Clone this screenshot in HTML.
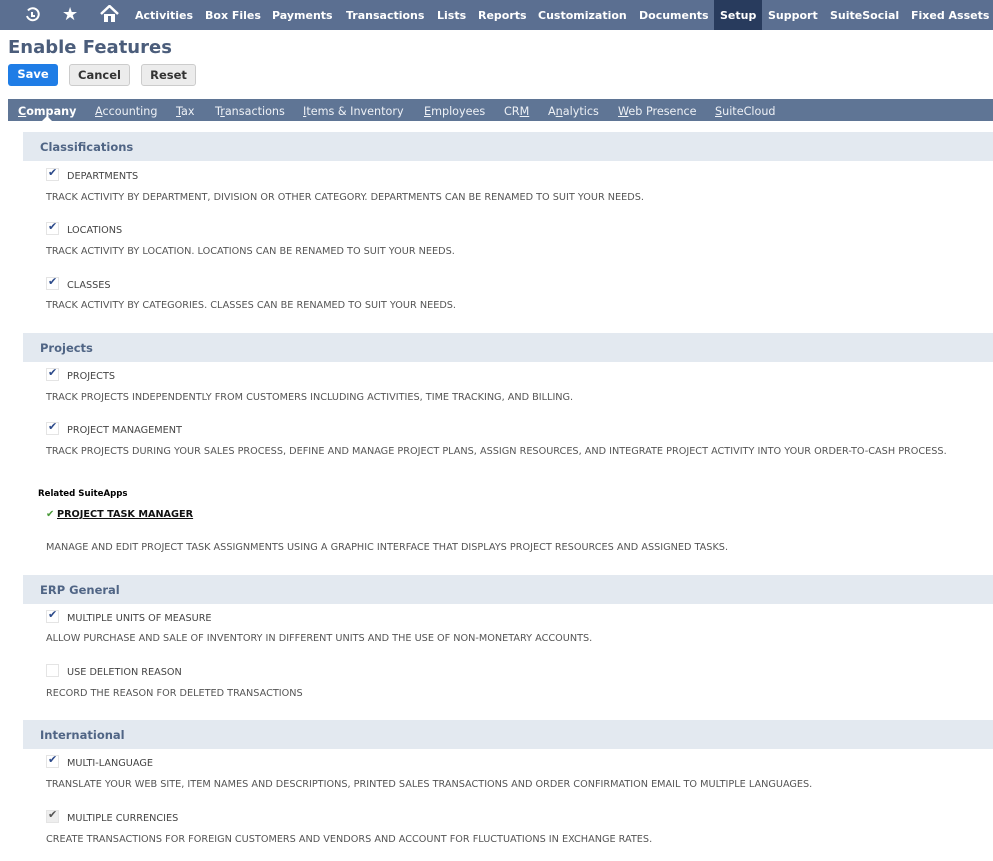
<!DOCTYPE html>
<html><head><meta charset="utf-8"><style>
*{margin:0;padding:0;box-sizing:border-box}
body{width:993px;height:861px;overflow:hidden;background:#fff;font-family:"DejaVu Sans","Liberation Sans",sans-serif;position:relative}
.a{position:absolute;white-space:nowrap}
#top{position:absolute;left:0;top:0;width:993px;height:30px;background:#5b6f91}
.n{position:absolute;top:9px;font-size:11px;font-weight:bold;color:#fff;white-space:nowrap}
#setup{position:absolute;left:714px;top:0;width:48px;height:30px;background:#283b5d}
h1{position:absolute;left:8px;top:37px;font-size:18px;font-weight:bold;color:#4b5d7b;white-space:nowrap}
.btn{position:absolute;top:64px;height:22px;font-size:11.5px;font-weight:bold;text-align:center;line-height:21px;border-radius:3px}
#tabs{position:absolute;left:8px;top:99px;width:985px;height:22px;background:#5f7595}
.t{position:absolute;top:105px;font-size:11.2px;color:#eef1f6;white-space:nowrap}
.t u{text-decoration:underline}
.sh{position:absolute;left:23px;width:970px;height:29px;background:#e3e9f0}
.sh span{position:absolute;left:17px;top:8px;font-size:11.5px;font-weight:bold;color:#506585}
.cb{position:absolute;left:46px;width:13px;height:13px;border:1px solid #e4e4e4;background:#fff}
.cb::after{content:"✔";position:absolute;left:1px;top:-3px;font-size:11px;color:#2c4a8a}
.cb.g::after{color:#555}
.cb.e::after{content:""}
.l{position:absolute;left:67px;font-size:9.7px;color:#444;white-space:nowrap}
.d{position:absolute;left:46px;font-size:9.7px;color:#555;white-space:nowrap}
</style></head><body>
<div id="top"></div><div id="setup"></div>
<svg class="a" style="left:24px;top:7px" width="16" height="16" viewBox="0 0 16 16"><path d="M4 3.5A6 6 0 1 1 3 9" fill="none" stroke="#fff" stroke-width="2"/><path d="M8 5v4h3" fill="none" stroke="#fff" stroke-width="2"/></svg>
<div class="a" style="left:62px;top:4px;font-size:18px;color:#fff">★</div>
<svg class="a" style="left:100px;top:5px" width="19" height="18" viewBox="0 0 19 18"><path d="M1 9L9.5 1 18 9" fill="none" stroke="#fff" stroke-width="2.5"/><path d="M4 9v8h11V9" fill="#fff"/><rect x="8" y="11" width="3" height="6" fill="#5b6f91"/></svg>
<div class="n" style="left:135px">Activities</div>
<div class="n" style="left:205px">Box Files</div>
<div class="n" style="left:272px">Payments</div>
<div class="n" style="left:346px">Transactions</div>
<div class="n" style="left:437px">Lists</div>
<div class="n" style="left:478px">Reports</div>
<div class="n" style="left:538px">Customization</div>
<div class="n" style="left:639px">Documents</div>
<div class="n" style="left:720px">Setup</div>
<div class="n" style="left:768px">Support</div>
<div class="n" style="left:830px">SuiteSocial</div>
<div class="n" style="left:911px">Fixed Assets</div>
<h1>Enable Features</h1>
<div class="btn" style="left:8px;width:50px;background:#1f7de6;color:#fff">Save</div>
<div class="btn" style="left:69px;width:61px;background:#ececec;border:1px solid #ccc;color:#333">Cancel</div>
<div class="btn" style="left:141px;width:55px;background:#ececec;border:1px solid #ccc;color:#333">Reset</div>
<div id="tabs"></div>
<div class="t" style="left:18px;font-weight:bold;color:#fff"><u>C</u>ompany</div>
<div class="a" style="left:42px;top:116px;width:0;height:0;border-left:5px solid transparent;border-right:5px solid transparent;border-bottom:5px solid #fff"></div>
<div class="t" style="left:95px"><u>A</u>ccounting</div>
<div class="t" style="left:176px"><u>T</u>ax</div>
<div class="t" style="left:215px">T<u>r</u>ansactions</div>
<div class="t" style="left:303px"><u>I</u>tems &amp; Inventory</div>
<div class="t" style="left:424px"><u>E</u>mployees</div>
<div class="t" style="left:504px">CR<u>M</u></div>
<div class="t" style="left:548px">A<u>n</u>alytics</div>
<div class="t" style="left:618px"><u>W</u>eb Presence</div>
<div class="t" style="left:715px"><u>S</u>uiteCloud</div>

<div class="sh" style="top:132px"><span>Classifications</span></div>
<div class="cb" style="top:168px"></div><div class="l" style="top:171px">DEPARTMENTS</div>
<div class="d" style="top:192px">TRACK ACTIVITY BY DEPARTMENT, DIVISION OR OTHER CATEGORY. DEPARTMENTS CAN BE RENAMED TO SUIT YOUR NEEDS.</div>
<div class="cb" style="top:222px"></div><div class="l" style="top:225px">LOCATIONS</div>
<div class="d" style="top:246px">TRACK ACTIVITY BY LOCATION. LOCATIONS CAN BE RENAMED TO SUIT YOUR NEEDS.</div>
<div class="cb" style="top:277px"></div><div class="l" style="top:280px">CLASSES</div>
<div class="d" style="top:300px">TRACK ACTIVITY BY CATEGORIES. CLASSES CAN BE RENAMED TO SUIT YOUR NEEDS.</div>

<div class="sh" style="top:333px"><span>Projects</span></div>
<div class="cb" style="top:368px"></div><div class="l" style="top:371px">PROJECTS</div>
<div class="d" style="top:392px">TRACK PROJECTS INDEPENDENTLY FROM CUSTOMERS INCLUDING ACTIVITIES, TIME TRACKING, AND BILLING.</div>
<div class="cb" style="top:422px"></div><div class="l" style="top:425px">PROJECT MANAGEMENT</div>
<div class="d" style="top:446px">TRACK PROJECTS DURING YOUR SALES PROCESS, DEFINE AND MANAGE PROJECT PLANS, ASSIGN RESOURCES, AND INTEGRATE PROJECT ACTIVITY INTO YOUR ORDER-TO-CASH PROCESS.</div>
<div class="a" style="left:38px;top:489px;font-size:8.6px;font-weight:bold;color:#000">Related SuiteApps</div>
<div class="a" style="left:46px;top:509px;font-size:10px;color:#4a9a3a">✔</div>
<div class="a" style="left:57px;top:509px;font-size:9.7px;font-weight:bold;color:#111;text-decoration:underline">PROJECT TASK MANAGER</div>
<div class="d" style="top:542px">MANAGE AND EDIT PROJECT TASK ASSIGNMENTS USING A GRAPHIC INTERFACE THAT DISPLAYS PROJECT RESOURCES AND ASSIGNED TASKS.</div>

<div class="sh" style="top:575px"><span>ERP General</span></div>
<div class="cb" style="top:610px"></div><div class="l" style="top:613px">MULTIPLE UNITS OF MEASURE</div>
<div class="d" style="top:633px">ALLOW PURCHASE AND SALE OF INVENTORY IN DIFFERENT UNITS AND THE USE OF NON-MONETARY ACCOUNTS.</div>
<div class="cb e" style="top:664px"></div><div class="l" style="top:667px">USE DELETION REASON</div>
<div class="d" style="top:688px">RECORD THE REASON FOR DELETED TRANSACTIONS</div>

<div class="sh" style="top:720px"><span>International</span></div>
<div class="cb" style="top:755px"></div><div class="l" style="top:758px">MULTI-LANGUAGE</div>
<div class="d" style="top:779px">TRANSLATE YOUR WEB SITE, ITEM NAMES AND DESCRIPTIONS, PRINTED SALES TRANSACTIONS AND ORDER CONFIRMATION EMAIL TO MULTIPLE LANGUAGES.</div>
<div class="cb g" style="top:810px;background:#eee"></div><div class="l" style="top:813px">MULTIPLE CURRENCIES</div>
<div class="d" style="top:834px">CREATE TRANSACTIONS FOR FOREIGN CUSTOMERS AND VENDORS AND ACCOUNT FOR FLUCTUATIONS IN EXCHANGE RATES.</div>
</body></html>
